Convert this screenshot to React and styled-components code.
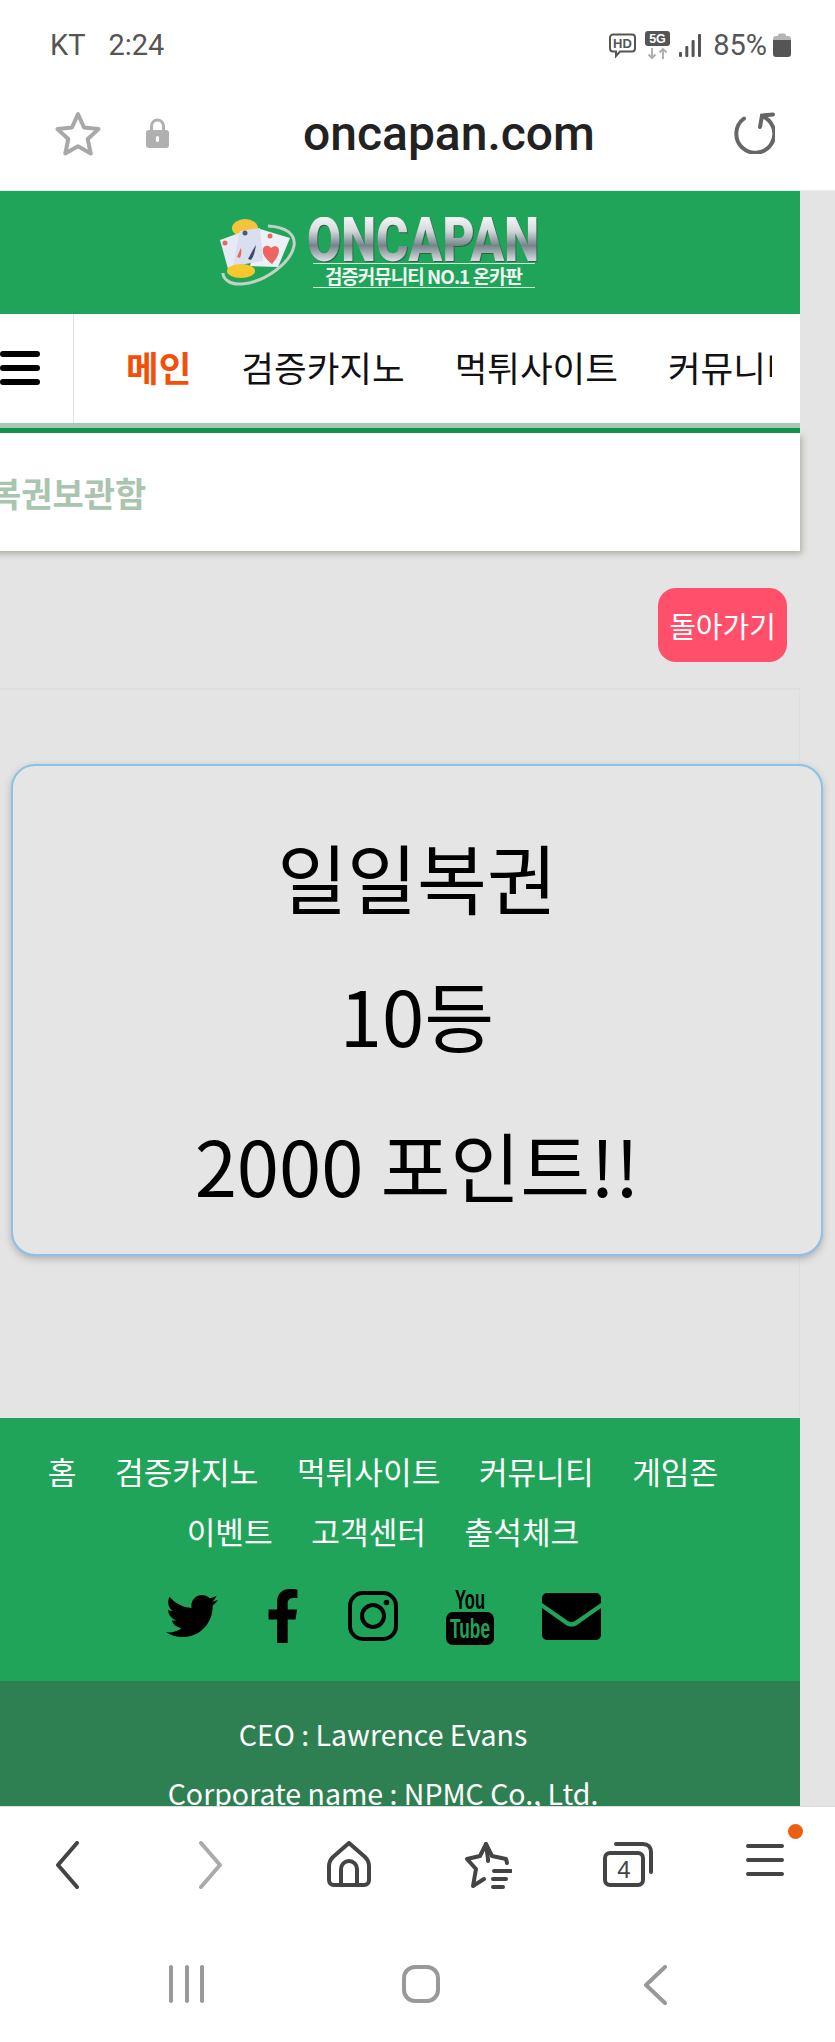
import styled, { createGlobalStyle } from 'styled-components';
import { FaTwitter, FaFacebookF } from 'react-icons/fa';

const KR = `'Noto Sans CJK KR', 'Noto Sans', sans-serif`;

const GlobalStyle = createGlobalStyle`
    html, body {
        margin: 0;
        padding: 0;
        background: #fff;
        overflow: hidden;
    }
    * { box-sizing: border-box; }
`;

const Screen = styled.div`
    width: 835px;
    height: 2042px;
    display: flex;
    flex-direction: column;
    overflow: hidden;
    background: #fff;
`;

/* 상단 상태바 */
const StatusBar = styled.div`
    height: 90px;
    flex: none;
    display: flex;
    align-items: center;
    justify-content: space-between;
    padding: 0 44px 0 50px;
    font-family: Roboto, sans-serif;
    font-size: 29px;
    color: #555;
`;

const Carrier = styled.div`
    display: flex;
    gap: 23px;
`;

const StatusIcons = styled.div`
    display: flex;
    align-items: center;
    gap: 9px;
`;

const Battery = styled.span`
    margin: 0 -3px 0 3px;
    line-height: 1;
    letter-spacing: 0;
`;

const AddressBar = styled.div`
    height: 101px;
    flex: none;
    display: flex;
    align-items: center;
    padding: 0 60px 14px 55px;
    border-bottom: 1px solid #e9efe9;
`;

const Lock = styled.svg`
    margin-left: 45px;
`;

const Url = styled.div`
    margin: 2px 0 0 134px;
    font-family: Roboto, sans-serif;
    font-size: 48px;
    font-weight: 500;
    color: #222;
    line-height: 1;
`;

const Reload = styled.svg`
    margin-left: auto;
`;

/* 가운데 웹페이지 영역 */
const Viewport = styled.div`
    flex: 1;
    min-height: 0;
    overflow: hidden;
    background: #e4e4e4;
`;

const Page = styled.div`
    width: 834px;
    margin-left: -34px;
`;

const Header = styled.header`
    height: 123px;
    background: #20a45a;
    display: flex;
    align-items: center;
    justify-content: center;
    gap: 13px;
    padding-right: 8px;
`;

const LogoText = styled.div`
    width: 230px;
    display: flex;
    flex-direction: column;
    align-items: center;
`;

const LogoName = styled.div`
    font-family: Roboto, sans-serif;
    font-weight: 900;
    font-size: 62px;
    line-height: 46px;
    height: 46px;
    white-space: nowrap;
    transform: scaleX(0.8);
    background: linear-gradient(#f4f6f6 0%, #d4d9db 30%, #76848a 62%, #e6eaec 100%);
    -webkit-background-clip: text;
    background-clip: text;
    color: transparent;
    filter: drop-shadow(1px 1px 0 #2f5f48);
`;

const LogoSub = styled.div`
    width: 222px;
    height: 25px;
    border-top: 1px solid #cfeedd;
    border-bottom: 1px solid #cfeedd;
    text-align: center;
    font-family: ${KR};
    font-size: 19px;
    font-weight: 700;
    line-height: 23px;
    letter-spacing: -1px;
    color: #eef7f1;
    white-space: nowrap;
`;

const Nav = styled.nav`
    height: 109px;
    background: #fff;
    display: flex;
`;

const MenuCell = styled.div`
    width: 108px;
    flex: none;
    border-right: 1px solid #e2e2e2;
    padding-bottom: 2px;
    display: flex;
    flex-direction: column;
    align-items: center;
    justify-content: center;
    gap: 8px;
`;

const MenuBar = styled.span`
    width: 40px;
    height: 6px;
    border-radius: 3px;
    background: #000;
`;

const NavList = styled.div`
    flex: 1;
    min-width: 0;
    margin-right: 28px;
    overflow: hidden;
    display: flex;
    align-items: center;
    gap: 50px;
    padding-left: 52px;
    padding-bottom: 4px;
`;

const NavItem = styled.span`
    flex: none;
    font-family: ${KR};
    font-size: 35.5px;
    line-height: 44px;
    font-weight: ${p => (p.$active ? 700 : 400)};
    color: ${p => (p.$active ? '#f2500a' : '#111')};
`;

const GreenLine = styled.div`
    height: 10px;
    background: linear-gradient(#a8c8b2 0 50%, #13924c 50% 100%);
`;

const SubNav = styled.div`
    height: 118px;
    background: #fff;
    display: flex;
    align-items: center;
    padding-left: 24px;
    font-family: ${KR};
    font-size: 34px;
    font-weight: 700;
    color: #a9c5ad;
    box-shadow: 2px 3px 6px rgba(110, 115, 90, 0.45);
    position: relative;
`;

const BackRow = styled.div`
    display: flex;
    justify-content: flex-end;
    padding: 37px 13px 26px 0;
`;

const BackButton = styled.button`
    width: 129px;
    height: 74px;
    border: none;
    border-radius: 18px;
    padding: 0;
    background: #ff4f6b;
    color: #fff;
    font-family: ${KR};
    font-size: 29px;
`;

const Panel = styled.div`
    height: 730px;
    border-top: 2px solid #dedede;
    border-right: 1px solid #dedede;
    padding: 74px 0 0 45px;
`;

const Card = styled.div`
    width: 812px;
    height: 492px;
    border: 2.5px solid #8fc1e0;
    border-radius: 24px;
    background: #e5e5e5;
    box-shadow: 0 3px 7px rgba(70, 80, 90, 0.35);
    display: flex;
    flex-direction: column;
    align-items: center;
    padding-top: 39px;
`;

const CardLine = styled.div`
    font-family: ${KR};
    font-size: 76px;
    line-height: 143px;
    margin-top: ${p => p.$shift || 0}px;
    color: #000;
    white-space: nowrap;
`;

const Footer = styled.footer`
    height: 263px;
    background: #20a45a;
    display: flex;
    flex-direction: column;
    align-items: center;
    padding-top: 22px;
`;

const FooterLinks = styled.div`
    display: flex;
    gap: 38.5px;
    height: 60px;
    align-items: center;
    font-family: ${KR};
    font-size: 31.2px;
    color: #fff;
`;

const Socials = styled.div`
    display: flex;
    align-items: center;
    gap: 48px;
    height: 58px;
    margin-top: 27px;
    color: #000;
`;

const FacebookIcon = styled(FaFacebookF)`
    margin: 0 -10px;
`;

const Company = styled.div`
    height: 130px;
    background: #2e7f52;
    padding-top: 23px;
    text-align: center;
    font-family: ${KR};
    font-size: 28.5px;
    line-height: 59px;
    color: #fff;
    white-space: nowrap;
`;

/* 하단 브라우저 툴바 */
const BottomBar = styled.div`
    height: 236px;
    flex: none;
    background: #fff;
    border-top: 1px solid #d8ded9;
    display: flex;
    flex-direction: column;
`;

const ToolRow = styled.div`
    height: 158px;
    display: flex;
    align-items: flex-start;
    padding: 34px 0 0 55px;
    position: relative;
`;

const Tool = styled.span`
    display: block;
    flex: none;
    height: 48px;
    margin-left: ${p => p.$gap || 0}px;
    position: relative;
`;

const Dot = styled.span`
    position: absolute;
    left: 43px;
    top: -17px;
    width: 15px;
    height: 15px;
    border-radius: 50%;
    background: #eb5e14;
`;

const SystemRow = styled.div`
    flex: 1;
    display: flex;
    align-items: flex-start;
    padding-left: 168px;
`;

const SysIcon = styled.svg`
    display: block;
    margin-left: ${p => p.$gap || 0}px;
`;

const navStroke = { fill: 'none', stroke: '#444', strokeWidth: 4, strokeLinecap: 'round', strokeLinejoin: 'round' };

function HdIcon() {
    return (
        <svg width="27" height="25" viewBox="0 0 27 25">
            <path d="M4 1.500h19a3 3 0 0 1 3 3v11a3 3 0 0 1-3 3H11l-4 4.500v-4.500H4a3 3 0 0 1-3-3v-11a3 3 0 0 1 3-3z" fill="none" stroke="#555" strokeWidth="2" />
            <text x="13.500" y="15" textAnchor="middle" fontFamily="'Liberation Sans', sans-serif" fontWeight="700" fontSize="13" fill="#555">HD</text>
        </svg>
    );
}

function FiveGIcon() {
    return (
        <svg width="25" height="29" viewBox="0 0 25 29">
            <rect x="0" y="0" width="25" height="15" rx="3" fill="#555" />
            <text x="12.500" y="12" textAnchor="middle" fontFamily="'Liberation Sans', sans-serif" fontWeight="700" fontSize="12.500" fill="#fff">5G</text>
            <path d="M7 17v10M3.500 23.500L7 27l3.500-3.500" fill="none" stroke="#aaa" strokeWidth="1.800" />
            <path d="M18 28V18M14.500 21.500L18 18l3.500 3.500" fill="none" stroke="#aaa" strokeWidth="1.800" />
        </svg>
    );
}

function SignalIcon() {
    return (
        <svg width="22" height="23" viewBox="0 0 22 23" fill="#555">
            <rect x="0" y="18" width="3" height="5" rx="1" />
            <rect x="6.300" y="12" width="3" height="11" rx="1" />
            <rect x="12.600" y="6" width="3" height="17" rx="1" />
            <rect x="19" y="0" width="3" height="23" rx="1" />
        </svg>
    );
}

function BatteryIcon() {
    return (
        <svg width="18" height="24" viewBox="0 0 18 24">
            <path d="M5 2.500a2 2 0 0 1 2-2h4a2 2 0 0 1 2 2V3h2a3 3 0 0 1 3 3v3H0V6a3 3 0 0 1 3-3h2z" fill="#b5b5b5" />
            <path d="M0 7h18v14a3 3 0 0 1-3 3H3a3 3 0 0 1-3-3z" fill="#555" />
        </svg>
    );
}

function StarIcon() {
    return (
        <svg width="46" height="45" viewBox="0 0 46 45" fill="none" stroke="#a8a8a8" strokeWidth="4" strokeLinejoin="round">
            <path d="M23 3l6 13.500 14.500 1.600-10.800 9.900 3 14.500L23 35.200 10.300 42.500l3-14.500L2.500 18.100 17 16.500z" />
        </svg>
    );
}

function Emblem() {
    return (
        <svg width="76" height="68" viewBox="0 0 76 68">
            <ellipse cx="25" cy="9" rx="13" ry="9" fill="#f4c53c" />
            <path d="M0 21l22-8 3 32-17 5z" fill="#e6eaf4" />
            <path d="M40 10l30 9-12 29-28-1z" fill="#eef0f8" />
            <path d="M20 12l20-3 3 33-30 5z" fill="#d9dfee" />
            <circle cx="5" cy="24" r="2.500" fill="#e66a5e" />
            <circle cx="25" cy="14" r="2.500" fill="#4a5a78" />
            <circle cx="50" cy="17" r="2.500" fill="#e66a5e" />
            <path d="M52 45c-6-5-10-9-9-15 1-4 6-4 8-1 3-3 8-2 8 2 0 5-3 9-7 14z" fill="#ec6560" />
            <path d="M28 40c3-5 5-10 8-14-1 6-2 11-5 15z" fill="#3d4a68" />
            <path d="M17 38c2-5 3-7 4-9 1 4 0 7-1 10z" fill="#e66a5e" />
            <ellipse cx="21" cy="52" rx="14" ry="7" fill="#f7c82e" />
            <path d="M48 7c18 1 28 8 26 20-3 16-28 36-52 38C10 66 3 60 3 54" fill="none" stroke="#c4d2c6" strokeWidth="3" />
        </svg>
    );
}

function InstagramIcon() {
    return (
        <svg width="50" height="50" viewBox="0 0 50 50" fill="none" stroke="#000" strokeWidth="4">
            <rect x="2" y="2" width="46" height="46" rx="13" />
            <circle cx="25" cy="25" r="11" />
            <circle cx="38.500" cy="11.500" r="2.800" fill="#000" stroke="none" />
        </svg>
    );
}

function YoutubeIcon() {
    return (
        <svg width="48" height="58" viewBox="0 0 48 58">
            <text x="24" y="22" textAnchor="middle" textLength="30" lengthAdjust="spacingAndGlyphs" fontFamily="'Liberation Sans', sans-serif" fontWeight="700" fontSize="27" fill="#000">You</text>
            <rect x="0" y="25" width="48" height="33" rx="7" fill="#000" />
            <text x="24" y="51" textAnchor="middle" textLength="40" lengthAdjust="spacingAndGlyphs" fontFamily="'Liberation Sans', sans-serif" fontWeight="700" fontSize="27" fill="#20a45a">Tube</text>
        </svg>
    );
}

function MailIcon() {
    return (
        <svg width="59" height="47" viewBox="0 0 59 47">
            <path d="M5 0h49a5 5 0 0 1 5 5v5L33 28c-2 1.500-5 1.500-7 0L0 10V5a5 5 0 0 1 5-5z" fill="#000" />
            <path d="M0 15l24 17c3 2 8 2 11 0l24-17v27a5 5 0 0 1-5 5H5a5 5 0 0 1-5-5z" fill="#000" />
        </svg>
    );
}

export default function App() {
    return (
        <>
            <GlobalStyle />
            <Screen>
                <StatusBar>
                    <Carrier>
                        <span>KT</span>
                        <span>2:24</span>
                    </Carrier>
                    <StatusIcons>
                        <HdIcon />
                        <FiveGIcon />
                        <SignalIcon />
                        <Battery>85%</Battery>
                        <BatteryIcon />
                    </StatusIcons>
                </StatusBar>

                <AddressBar>
                    <StarIcon />
                    <Lock width="23" height="30" viewBox="0 0 23 30">
                        <path d="M5.500 13V8a6 6 0 0 1 12 0v5" fill="none" stroke="#b0b0b0" strokeWidth="3" />
                        <rect x="0" y="12" width="23" height="18" rx="3" fill="#b0b0b0" />
                        <rect x="10" y="18" width="3" height="6" rx="1.500" fill="#fff" />
                    </Lock>
                    <Url>oncapan.com</Url>
                    <Reload width="42" height="42" viewBox="0 0 42 42" fill="none" stroke="#666" strokeWidth="4" strokeLinecap="round">
                        <path d="M11 6.500A19 19 0 1 0 29 4" />
                        <path d="M27 15L29 3.500 40 2.500" />
                    </Reload>
                </AddressBar>

                <Viewport>
                    <Page>
                        <Header>
                            <Emblem />
                            <LogoText>
                                <LogoName>ONCAPAN</LogoName>
                                <LogoSub>검증커뮤니티 NO.1 온카판</LogoSub>
                            </LogoText>
                        </Header>

                        <Nav>
                            <MenuCell>
                                <MenuBar />
                                <MenuBar />
                                <MenuBar />
                            </MenuCell>
                            <NavList>
                                <NavItem $active>메인</NavItem>
                                <NavItem>검증카지노</NavItem>
                                <NavItem>먹튀사이트</NavItem>
                                <NavItem>커뮤니티</NavItem>
                            </NavList>
                        </Nav>
                        <GreenLine />
                        <SubNav>복권보관함</SubNav>

                        <BackRow>
                            <BackButton>돌아가기</BackButton>
                        </BackRow>

                        <Panel>
                            <Card>
                                <CardLine>일일복권</CardLine>
                                <CardLine $shift={-5}>10등</CardLine>
                                <CardLine $shift={7}>2000 포인트!!</CardLine>
                            </Card>
                        </Panel>

                        <Footer>
                            <FooterLinks>
                                <span>홈</span>
                                <span>검증카지노</span>
                                <span>먹튀사이트</span>
                                <span>커뮤니티</span>
                                <span>게임존</span>
                            </FooterLinks>
                            <FooterLinks>
                                <span>이벤트</span>
                                <span>고객센터</span>
                                <span>출석체크</span>
                            </FooterLinks>
                            <Socials>
                                <FaTwitter size={52} />
                                <FacebookIcon size={54} />
                                <InstagramIcon />
                                <YoutubeIcon />
                                <MailIcon />
                            </Socials>
                        </Footer>
                        <Company>
                            <div>CEO : Lawrence Evans</div>
                            <div>Corporate name : NPMC Co., Ltd.</div>
                        </Company>
                    </Page>
                </Viewport>

                <BottomBar>
                    <ToolRow>
                        <Tool>
                            <svg width="24" height="48" viewBox="0 0 24 48" {...navStroke}><path d="M22 2L3 24l19 22" /></svg>
                        </Tool>
                        <Tool $gap={120}>
                            <svg width="24" height="48" viewBox="0 0 24 48" {...navStroke} stroke="#aaa"><path d="M2 2l19 22L2 46" /></svg>
                        </Tool>
                        <Tool $gap={104}>
                            <svg width="44" height="46" viewBox="0 0 44 46" {...navStroke}>
                                <path d="M22 2L6 16c-2 2-4 5-4 9v14c0 3 2 5 5 5h30c3 0 5-2 5-5V25c0-4-2-7-4-9z" />
                                <path d="M14 44V28a8 8 0 0 1 16 0v16" />
                            </svg>
                        </Tool>
                        <Tool $gap={93}>
                            <svg width="48" height="48" viewBox="0 0 48 48" {...navStroke}>
                                <path d="M24 20V18L22 3 16 15 3 18l9 10-3 17 11-7" />
                                <path d="M22 3l6 12 14 3 1 4" />
                                <path d="M30 30h17M29 38h13M29 46h10" />
                            </svg>
                        </Tool>
                        <Tool $gap={91}>
                            <svg width="50" height="46" viewBox="0 0 50 46" {...navStroke}>
                                <rect x="2" y="12" width="38" height="32" rx="5" />
                                <path d="M13 3h27c5 0 8 3 8 8v20" />
                                <text x="21" y="37" textAnchor="middle" fontFamily="'Liberation Sans', sans-serif" fontSize="24" fill="#444" stroke="none">4</text>
                            </svg>
                        </Tool>
                        <Tool $gap={92}>
                            <svg width="40" height="38" viewBox="0 0 40 38" {...navStroke} strokeWidth="4"><path d="M3 5h34M3 19h34M3 33h34" /></svg>
                            <Dot />
                        </Tool>
                    </ToolRow>
                    <SystemRow>
                        <SysIcon width="38" height="38" viewBox="0 0 38 38" fill="none" stroke="#999" strokeWidth="4" strokeLinecap="round"><path d="M3 2v34M19 2v34M34 2v34" /></SysIcon>
                        <SysIcon $gap={196} width="38" height="38" viewBox="0 0 38 38" fill="none" stroke="#999" strokeWidth="4"><rect x="2" y="2" width="34" height="34" rx="11" /></SysIcon>
                        <SysIcon $gap={203} width="24" height="40" viewBox="0 0 24 40" fill="none" stroke="#999" strokeWidth="4" strokeLinecap="round" strokeLinejoin="round"><path d="M22 2L3 20l19 18" /></SysIcon>
                    </SystemRow>
                </BottomBar>
            </Screen>
        </>
    );
}
